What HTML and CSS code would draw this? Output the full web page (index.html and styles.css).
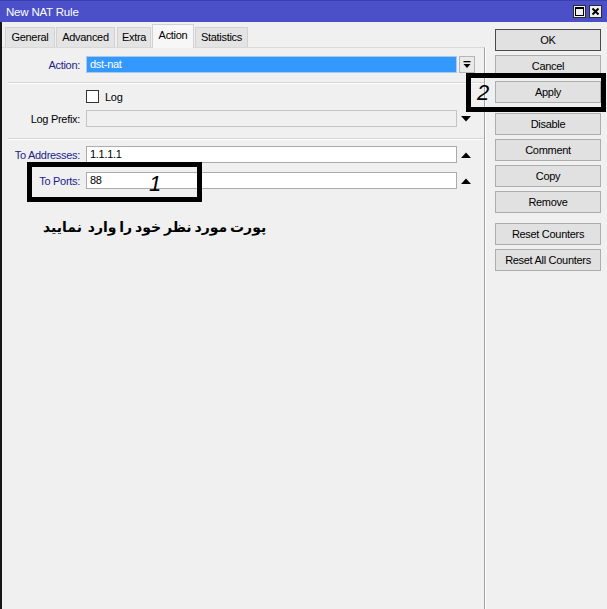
FILE: index.html
```html
<!DOCTYPE html>
<html lang="en">
<head>
<meta charset="utf-8">
<title>New NAT Rule</title>
<link rel="stylesheet" href="styles.css">
</head>
<body>
<div class="window">
  <div class="titlebar">
    <span class="title">New NAT Rule</span>
    <div class="tb-btns">
      <span class="tb-btn"><svg width="11" height="11" viewBox="0 0 11 11"><rect x="1.5" y="1.5" width="8" height="8" fill="none" stroke="#000" stroke-width="1"/><line x1="1.5" y1="2.5" x2="9.5" y2="2.5" stroke="#000" stroke-width="1"/></svg></span>
      <span class="tb-btn"><svg width="11" height="11" viewBox="0 0 11 11"><path d="M2.5 2.5 L8.5 8.5 M8.5 2.5 L2.5 8.5" stroke="#000" stroke-width="2"/></svg></span>
    </div>
  </div>
  <div class="main">
    <div class="left">
      <div class="tabs">
        <span class="tab t-general">General</span>
        <span class="tab t-advanced">Advanced</span>
        <span class="tab t-extra">Extra</span>
        <span class="tab t-action active">Action</span>
        <span class="tab t-stats">Statistics</span>
      </div>
      <div class="panel">
        <div class="row">
          <span class="lbl blue">Action:</span>
          <div class="field select">dst-nat</div>
          <div class="side dd"><svg width="8" height="8" viewBox="0 0 8 8"><rect x="0.5" y="0" width="7" height="1.3" fill="#000"/><path d="M0.5 3 L7.5 3 L4 7 Z" fill="#000"/></svg></div>
        </div>
        <div class="sep sep-a"></div>
        <div class="row check-row">
          <span class="box"></span><span class="check-lbl">Log</span>
        </div>
        <div class="row row-prefix">
          <span class="lbl">Log Prefix:</span>
          <div class="field disabled"></div>
          <div class="side"><svg width="10" height="6" viewBox="0 0 10 6"><path d="M0 0 L10 0 L5 5.5 Z" fill="#000"/></svg></div>
        </div>
        <div class="sep sep-b"></div>
        <div class="row row-addr">
          <span class="lbl blue">To Addresses:</span>
          <div class="field">1.1.1.1</div>
          <div class="side"><svg width="10" height="6" viewBox="0 0 10 6"><path d="M0 6 L10 6 L5 0.5 Z" fill="#000"/></svg></div>
        </div>
        <div class="row row-ports">
          <span class="lbl blue">To Ports:</span>
          <div class="field">88</div>
          <div class="side"><svg width="10" height="6" viewBox="0 0 10 6"><path d="M0 6 L10 6 L5 0.5 Z" fill="#000"/></svg></div>
        </div>
        <div class="farsi" dir="rtl" lang="fa">پورت مورد نظر خود را وارد&nbsp; نمایید</div>
      </div>
    </div>
    <div class="right">
      <span class="btn default">OK</span>
      <span class="btn">Cancel</span>
      <span class="btn">Apply</span>
      <span class="btn gap">Disable</span>
      <span class="btn">Comment</span>
      <span class="btn">Copy</span>
      <span class="btn">Remove</span>
      <span class="btn gap">Reset Counters</span>
      <span class="btn">Reset All Counters</span>
    </div>
  </div>
  <div class="mark mark1"></div>
  <div class="mark mark2"></div>
  <span class="num num1">1</span>
  <span class="num num2">2</span>
</div>
</body>
</html>
```
FILE: styles.css
```css
* { box-sizing: border-box; }
html, body { margin: 0; padding: 0; background: #f0f0f0; }
.window {
  position: relative;
  width: 607px;
  height: 609px;
  overflow: hidden;
  background: #f0f0f0;
  font-family: "Liberation Sans", Arial, sans-serif;
  font-size: 11px;
  letter-spacing: -0.3px;
  color: #000;
}
.titlebar {
  height: 22px;
  background: #4b50c8;
  border-top: 1px solid #3a3fae;
  display: flex;
  align-items: center;
  justify-content: space-between;
  padding: 0 5px 0 6px;
}
.title { color: #fff; font-size: 11.5px; letter-spacing: -0.2px; }
.tb-btns { display: flex; gap: 3px; }
.tb-btn {
  width: 13px; height: 13px;
  background: #f0f0f0;
  border: 1px solid #2a2a2a;
  display: flex; align-items: center; justify-content: center;
}
.main { display: flex; height: 587px; }
.left {
  width: 485px;
  border-left: 2px solid #151515;
  display: flex;
  flex-direction: column;
}
.tabs {
  height: 25px;
  display: flex;
  align-items: flex-end;
  padding-left: 3px;
  position: relative;
  z-index: 1;
}
.tab {
  height: 20px;
  line-height: 19px;
  text-align: center;
  background: #e4e4e4;
  border: 1px solid #d2d2d2;
  border-bottom: none;
  margin-right: 1px;
}
.t-general { width: 50px; }
.t-advanced { width: 59px; margin-right: 2px; }
.t-extra { width: 34px; margin-right: 1px; }
.t-action { width: 42px; }
.t-stats { width: 53px; }
.tab.active {
  height: 24px;
  line-height: 21px;
  background: #f7f7f7;
  margin-bottom: -1px;
}
.panel {
  flex: 1;
  border-top: 1px solid #d9d9d9;
  border-right: 1px solid #a0a0a0;
  box-shadow: 1px 0 0 #ffffff;
  padding-top: 8px;
}
.row { display: flex; align-items: center; height: 17px; }
.lbl { width: 78px; margin-right: 6px; text-align: right; color: #000; }
.lbl.blue { color: #1d1d8c; }
.field {
  width: 371px;
  height: 17px;
  border: 1px solid #ababab;
  background: #fff;
  padding-left: 3px;
  line-height: 15px;
  white-space: nowrap;
}
.field.select { background: #3399ff; border-color: #a9c9ea; color: #fff; }
.field.disabled { background: #f0f0f0; border-color: #c4c4c4; }
.side {
  width: 16px; height: 17px; margin-left: 1px;
  display: flex; align-items: center; justify-content: center;
}
.side.dd { border: 1px solid #b5b5b5; background: #e9e9e9; margin-left: 2px; }
.sep { margin-left: 6px; height: 2px; border-top: 1px solid #d5d5d5; border-bottom: 1px solid #ffffff; }
.sep-a { margin-top: 9px; }
.sep-b { margin-top: 11px; }
.check-row { margin-top: 6px; height: 13px; padding-left: 84px; }
.box { width: 13px; height: 13px; border: 1px solid #333; background: #fff; }
.check-lbl { margin-left: 6px; }
.row-prefix { margin-top: 7px; }
.row-addr { margin-top: 6px; }
.row-ports { margin-top: 9px; }
.farsi {
  margin-top: 26px;
  margin-left: 41px;
  width: fit-content;
  font-family: "DejaVu Sans", sans-serif;
  font-weight: bold;
  font-size: 14px;
  letter-spacing: 0;
  word-spacing: -2px;
  line-height: 24px;
}
.right {
  width: 122px;
  padding: 7px 0 0 10px;
  display: flex;
  flex-direction: column;
  gap: 4px;
}
.btn {
  width: 106px;
  height: 22px;
  line-height: 20px;
  text-align: center;
  background: #e1e1e1;
  border: 1px solid #adadad;
}
.btn.default { border-color: #4a4a4a; }
.btn.gap { margin-top: 6px; }
.mark { position: absolute; border: 5px solid #000; }
.mark1 { left: 27px; top: 162px; width: 175px; height: 40px; }
.mark2 { left: 466px; top: 73px; width: 140px; height: 39px; }
.num {
  position: absolute;
  font-family: "Liberation Sans", Arial, sans-serif;
  font-style: italic;
  font-size: 22px;
  line-height: 22px;
  letter-spacing: 0;
}
.num1 { left: 149px; top: 173px; }
.num2 { left: 477px; top: 82px; }
```
